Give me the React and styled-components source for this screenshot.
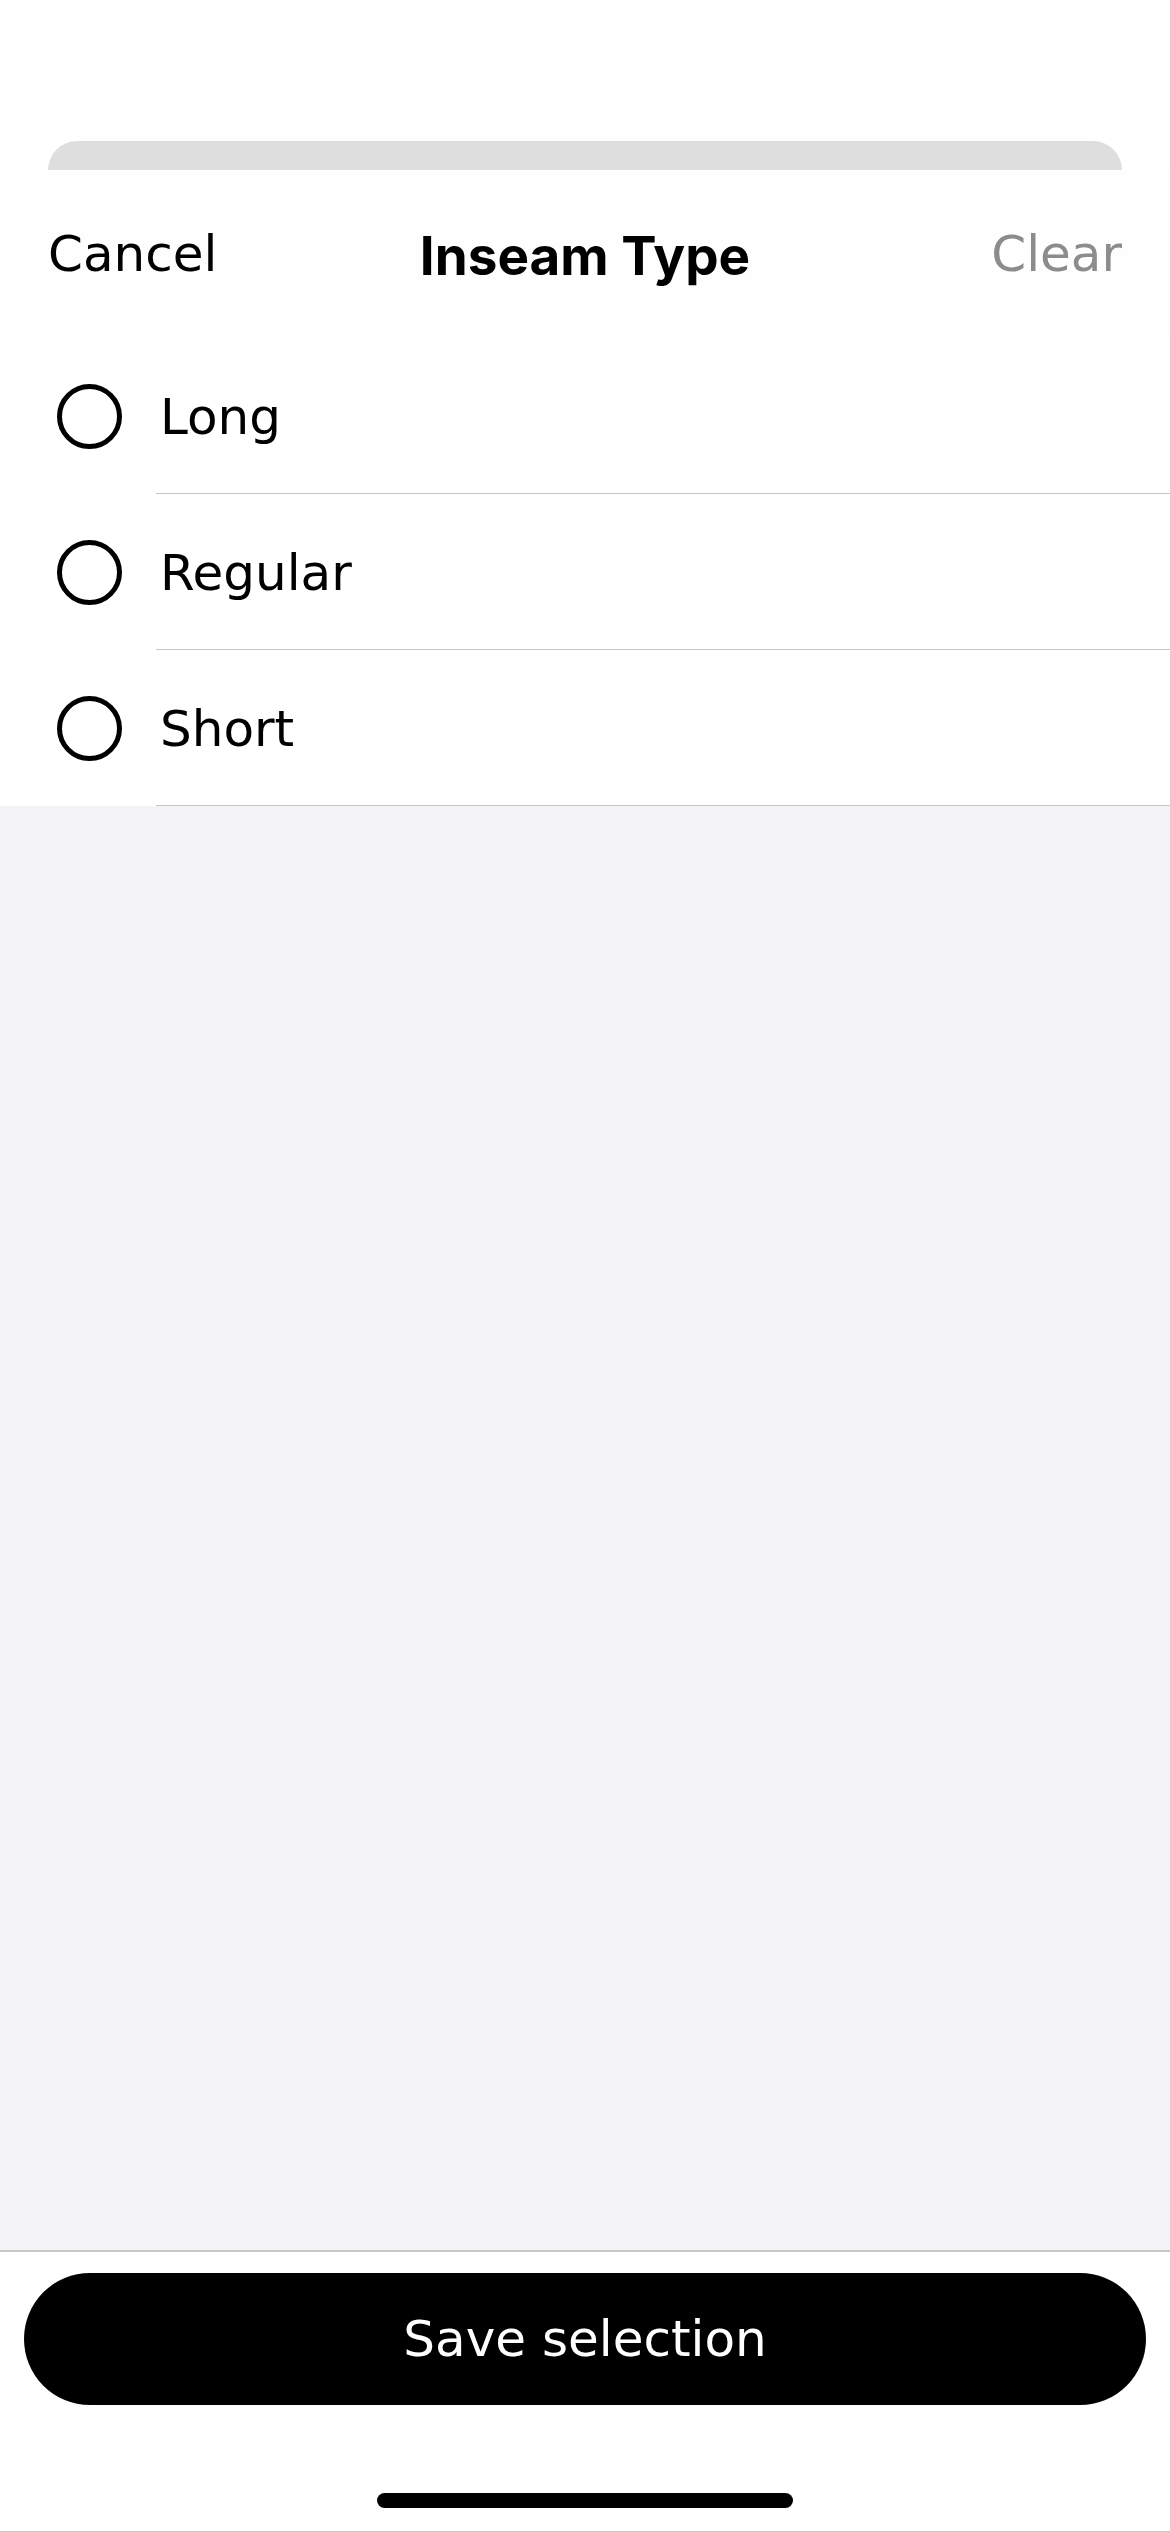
import React from "react";
import styled, { createGlobalStyle } from "styled-components";

const Global = createGlobalStyle`
  html, body { margin: 0; padding: 0; background: #ffffff; }
  body { font-family: "DejaVu Sans", "Liberation Sans", sans-serif; -webkit-font-smoothing: antialiased; }
  * { box-sizing: border-box; }
`;

const Screen = styled.div`
  width: 1170px;
  height: 2532px;
  display: flex;
  flex-direction: column;
  background: #ffffff;
  overflow: hidden;
`;

const TopSpace = styled.div`
  height: 141px;
  flex-shrink: 0;
`;

const BackCard = styled.div`
  height: 29px;
  margin: 0 48px;
  background: #dedede;
  border-radius: 30px 30px 0 0;
  flex-shrink: 0;
`;

const Header = styled.header`
  height: 168px;
  flex-shrink: 0;
  display: grid;
  grid-template-columns: 1fr auto 1fr;
  align-items: center;
  padding: 0 48px;
  background: #fefefe;
`;

const HeaderButton = styled.button`
  border: 0;
  background: none;
  padding: 0;
  font-family: "DejaVu Sans", sans-serif;
  font-size: 50px;
  color: ${(p) => (p.$muted ? "#8c8c8c" : "#000000")};
  justify-self: ${(p) => (p.$end ? "end" : "start")};
  cursor: pointer;
`;

const Title = styled.h1`
  margin: 0;
  font-family: "Inter", sans-serif;
  font-weight: 700;
  font-size: 53px;
  color: #000000;
  position: relative;
  top: 2px;
`;

const List = styled.ul`
  list-style: none;
  margin: 0;
  padding: 0;
  background: #ffffff;
  flex-shrink: 0;
`;

const Row = styled.li`
  display: flex;
  align-items: stretch;
  height: 156px;
`;

const RadioCell = styled.div`
  width: 156px;
  padding-left: 57px;
  display: flex;
  align-items: center;
`;

const Radio = styled.span`
  width: 65px;
  height: 65px;
  border-radius: 50%;
  border: 5px solid #000000;
  display: block;
`;

const Label = styled.div`
  flex: 1;
  display: flex;
  align-items: center;
  padding-left: 4px;
  border-bottom: 1px solid #c6c6c8;
  font-size: 50px;
  color: #000000;
  padding-top: 2px;
`;

const Fill = styled.div`
  flex: 1;
  background: #f2f2f7;
`;

const Footer = styled.footer`
  flex-shrink: 0;
  border-top: 2px solid #c8c8c8;
  border-bottom: 1px solid #c8c8c8;
  background: #ffffff;
  display: flex;
  flex-direction: column;
  align-items: center;
  padding: 21px 24px 23px;
`;

const SaveButton = styled.button`
  width: 100%;
  height: 132px;
  border: 0;
  border-radius: 66px;
  background: #000000;
  color: #ffffff;
  font-family: "DejaVu Sans", sans-serif;
  font-size: 50px;
  cursor: pointer;
`;

const HomeIndicator = styled.div`
  margin-top: 88px;
  width: 416px;
  height: 15px;
  border-radius: 8px;
  background: #000000;
`;

const options = ["Long", "Regular", "Short"];

export default function App() {
  return (
    <>
      <Global />
      <Screen>
        <TopSpace />
        <BackCard />
        <Header>
          <HeaderButton>Cancel</HeaderButton>
          <Title>Inseam Type</Title>
          <HeaderButton $muted $end>Clear</HeaderButton>
        </Header>
        <List>
          {options.map((o) => (
            <Row key={o}>
              <RadioCell>
                <Radio />
              </RadioCell>
              <Label>{o}</Label>
            </Row>
          ))}
        </List>
        <Fill />
        <Footer>
          <SaveButton>Save selection</SaveButton>
          <HomeIndicator />
        </Footer>
      </Screen>
    </>
  );
}
